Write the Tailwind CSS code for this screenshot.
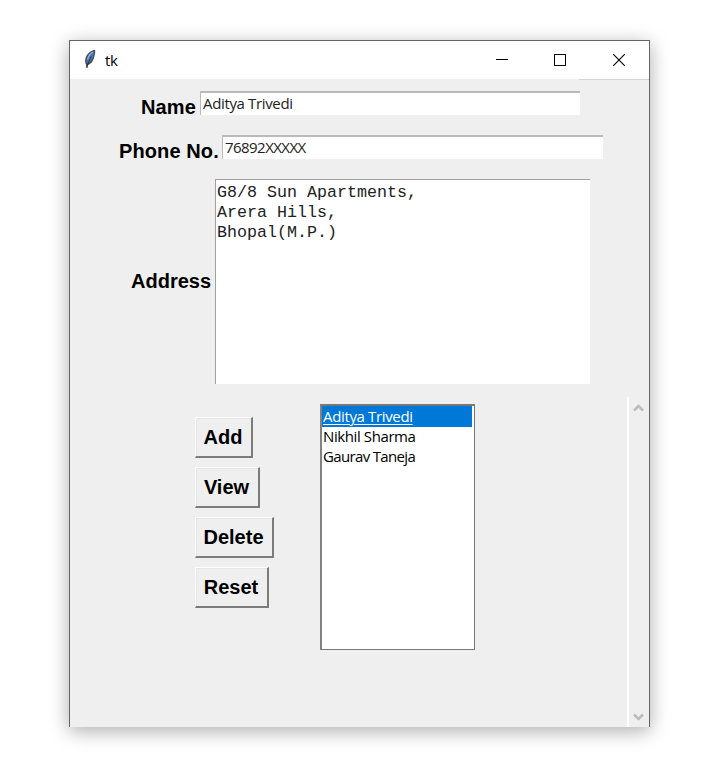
<!DOCTYPE html>
<html lang="en">
<head>
<meta charset="utf-8">
<title>tk</title>
<script src="https://cdn.jsdelivr.net/npm/@tailwindcss/browser@4"></script>
</head>
<body class="h-[777px] overflow-hidden bg-white pl-[69px] pt-[40px] font-['Open_Sans','Noto_Sans',sans-serif] text-black">
<main class="flex h-[687px] w-[581px] flex-col border-x border-t border-[#656565] bg-[#efefef] shadow-[0_4px_18px_0px_rgba(0,0,0,0.33)]">
  <header class="flex h-[38px] shrink-0 items-center bg-white">
    <svg class="mb-[2px] ml-[13px] h-[20px] w-[14px]" viewBox="0 0 14 20">
      <path d="M12 .8 C8 1.2 3.2 5 2.3 10 C1.8 12.8 2.3 14 3 15.7 L3.4 19 L4.4 19.2 L4.8 16 C8 15.4 10 12.2 11 9 C12 5.4 12.6 3 12 .8Z" fill="#4a4f57"/>
      <path d="M11 2.2 C7.6 3.2 4.2 7 3.6 11 L3.8 14.5 C7 13.5 9.3 10 10 7.6Z" fill="#447abd"/>
      <path d="M10 3 C7.4 4.5 5.2 7.5 4.6 10.5" stroke="#8cb5df" stroke-width="1.3" fill="none"/>
      <path d="M8.2 7.5 C6.5 10.8 4.7 14 3.9 18.5" stroke="#20242a" stroke-width=".8" fill="none"/>
    </svg>
    <span class="mb-[1px] ml-[8px] text-[15px] leading-5 tracking-[-0.4px]">tk</span>
    <div class="ml-auto flex items-center">
      <svg class="h-[38px] w-[58px]" viewBox="0 0 58 38" shape-rendering="crispEdges"><rect x="23" y="18" width="12" height="1"/></svg>
      <svg class="h-[38px] w-[58px]" viewBox="0 0 58 38" shape-rendering="crispEdges"><rect x="23.5" y="13.5" width="11" height="11" fill="none" stroke="#000"/></svg>
      <svg class="h-[38px] w-[60px]" viewBox="0 0 60 38"><path d="M24.2 13.2 L35.8 24.8 M35.8 13.2 L24.2 24.8" stroke="#000" stroke-width="1.1"/></svg>
    </div>
  </header>
  <div class="ml-auto h-px w-[70px] shrink-0 bg-[#d5d5d5]"></div>
  <section class="flex h-[317px] shrink-0 flex-col">
    <div class="mt-[11px] flex h-[24px] pl-[71px]">
      <label class="mt-[5px] w-[59px] font-['Liberation_Sans',Arial,sans-serif] text-[20px] font-bold leading-[23px] tracking-[0.15px]">Name</label>
      <div class="h-[24px] w-[380px] border-l border-t-2 border-[#bababa] bg-white pl-[2px] text-[15px] leading-[21px] tracking-[-0.35px] text-[#222]">Aditya Trivedi</div>
    </div>
    <div class="mt-[20px] flex h-[24px] pl-[49px]">
      <label class="mt-[5px] w-[103px] font-['Liberation_Sans',Arial,sans-serif] text-[20px] font-bold leading-[23px] tracking-[0.1px]">Phone No.</label>
      <div class="h-[24px] w-[381px] border-l border-t-2 border-[#bababa] bg-white pl-[2px] text-[15px] leading-[21px] tracking-[-0.55px] text-[#222]">76892XXXXX</div>
    </div>
    <div class="mt-[20px] flex h-[205px] items-center pl-[61px]">
      <label class="w-[84px] font-['Liberation_Sans',Arial,sans-serif] text-[20px] font-bold leading-[23px]">Address</label>
      <div class="h-[205px] w-[375px] whitespace-pre border-l border-t border-[#a0a0a0] bg-white pl-[1px] pt-[3px] font-['Liberation_Mono','Courier_New',monospace] text-[16.67px] leading-[20px] text-[#222]">G8/8 Sun Apartments,
Arera Hills,
Bhopal(M.P.)</div>
    </div>
  </section>
  <section class="flex flex-1">
    <div class="ml-[125px] mt-[20px] flex w-[125px] flex-col items-start gap-[9px] font-['Liberation_Sans',Arial,sans-serif] text-[20px] font-bold leading-[38px]">
      <button class="h-[41px] w-[58px] border border-b-2 border-r-2 border-b-[#7c7c7c] border-l-white border-r-[#7c7c7c] border-t-white pr-[1px] shadow-[inset_1px_1px_0_#e6e6e6]">Add</button>
      <button class="h-[41px] w-[65px] border border-b-2 border-r-2 border-b-[#7c7c7c] border-l-white border-r-[#7c7c7c] border-t-white pr-[1px] shadow-[inset_1px_1px_0_#e6e6e6]">View</button>
      <button class="h-[41px] w-[79px] border border-b-2 border-r-2 border-b-[#7c7c7c] border-l-white border-r-[#7c7c7c] border-t-white pr-[1px] shadow-[inset_1px_1px_0_#e6e6e6]">Delete</button>
      <button class="h-[41px] w-[74px] border border-b-2 border-r-2 border-b-[#7c7c7c] border-l-white border-r-[#7c7c7c] border-t-white pr-[1px] shadow-[inset_1px_1px_0_#e6e6e6]">Reset</button>
    </div>
    <ul class="mt-[7px] h-[246px] w-[155px] border border-l-2 border-t-2 border-b-[#777] border-l-[#828282] border-r-[#777] border-t-[#777] bg-white text-[15px] leading-[19px] tracking-[-0.35px]">
      <li class="mr-[2px] h-[21px] bg-[#0078d7] pl-[1px] leading-[20px] text-white underline decoration-1 underline-offset-2">Aditya Trivedi</li>
      <li class="h-[20px] pl-[1px] tracking-[-0.4px]">Nikhil Sharma</li>
      <li class="h-[20px] pl-[1px] tracking-[-0.65px]">Gaurav Taneja</li>
    </ul>
    <div class="ml-auto flex w-[22px] flex-col items-center justify-between border-l-2 border-white pb-[5px] pr-[1px] pt-[6px]">
      <svg class="h-[10px] w-[11px]" viewBox="0 0 11 10"><path d="M1 7.5 L5.5 3 L10 7.5" fill="none" stroke="#bdbdbd" stroke-width="2.6"/></svg>
      <svg class="h-[10px] w-[11px]" viewBox="0 0 11 10"><path d="M1 2.5 L5.5 7 L10 2.5" fill="none" stroke="#bdbdbd" stroke-width="2.6"/></svg>
    </div>
  </section>
</main>
</body>
</html>
